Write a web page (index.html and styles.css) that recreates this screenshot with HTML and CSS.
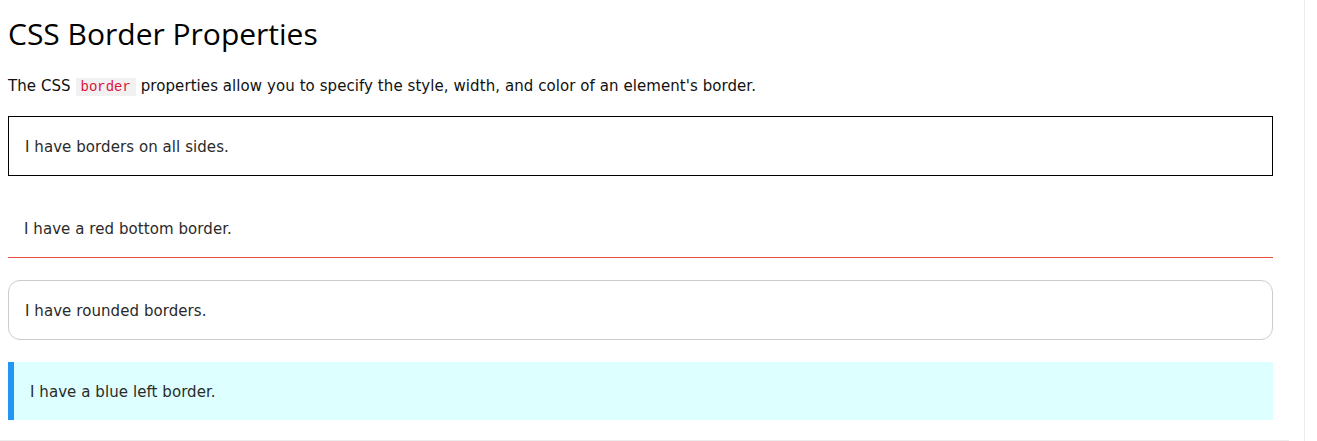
FILE: index.html
```html
<!DOCTYPE html>
<html lang="en">
<head>
<meta charset="utf-8">
<title>CSS Border Properties</title>
<link rel="stylesheet" href="styles.css">
</head>
<body>
<div class="page">
  <main class="content">
    <h1 class="title">CSS Border Properties</h1>
    <p class="intro">The CSS <code class="code">border</code> properties allow you to specify the style, width, and color of an element's border.</p>
    <div class="box box-all">I have borders on all sides.</div>
    <div class="box box-bottom">I have a red bottom border.</div>
    <div class="box box-rounded">I have rounded borders.</div>
    <div class="box box-left">I have a blue left border.</div>
    <div class="divider"></div>
  </main>
</div>
</body>
</html>
```
FILE: styles.css
```css
html, body {
  margin: 0;
  padding: 0;
  background: #fff;
}
body {
  font-family: "DejaVu Sans", Verdana, sans-serif;
  font-size: 15px;
  line-height: 1.5;
  color: #222;
  letter-spacing: 0.07px;
}
.page {
  width: 1305px;
  min-height: 441px;
  border-right: 1px solid #ececec;
  box-sizing: border-box;
  overflow: hidden;
}
.content {
  width: 1265px;
  padding: 0 8px;
}
.title {
  font-family: "Open Sans", "Noto Sans", sans-serif;
  font-weight: 400;
  font-size: 30px;
  letter-spacing: 0;
  line-height: 40px;
  margin: 14px 0 21px;
  color: #000;
}
.intro {
  margin: 0 0 18px;
  line-height: 22px;
  color: #111;
}
.code {
  font-family: "Liberation Mono", "DejaVu Sans Mono", monospace;
  font-size: 14px;
  letter-spacing: 0;
  color: crimson;
  background: #f1f1f1;
  padding: 1px 5px;
}
.box {
  padding: 17px 16px 15px;
  line-height: 26px;
  margin-bottom: 22px;
  color: #2a2a2a;
}
.box-all {
  border: 1px solid #000;
}
.box-bottom {
  padding-top: 18px;
  border-bottom: 1px solid #e74c3c;
}
.box-rounded {
  border: 1px solid #ccc;
  border-radius: 12px;
}
.box-left {
  border-left: 6px solid #2196F3;
  background: #ddffff;
  margin-bottom: 20px;
}
.divider {
  width: 1289px;
  margin-left: -8px;
  border-top: 1px solid #ececec;
}
```
